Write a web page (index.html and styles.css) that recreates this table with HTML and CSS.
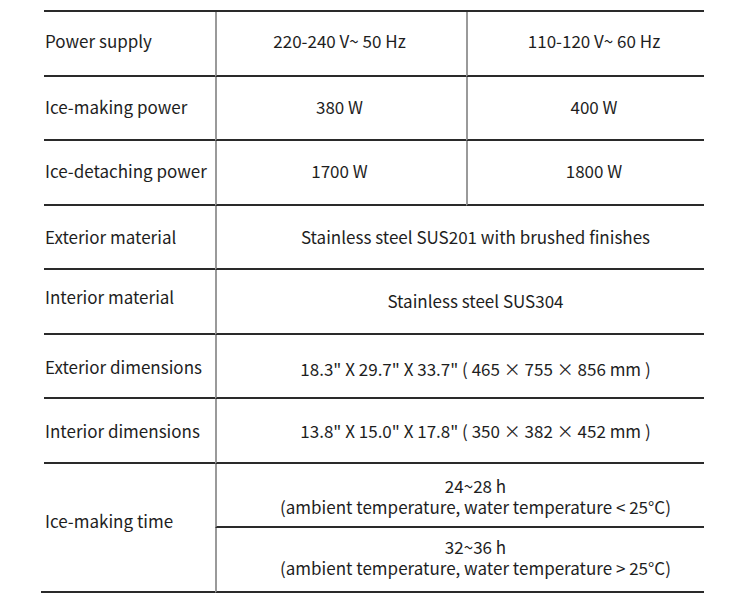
FILE: index.html
```html
<!DOCTYPE html>
<html lang="en">
<head>
<meta charset="utf-8">
<title>Specifications</title>
<link rel="stylesheet" href="styles.css">
</head>
<body>
<div class="spec">
  <div class="label r1 up3">Power supply</div>
  <div class="val c2 r1 up3">220-240 V~ 50 Hz</div>
  <div class="val c3 r1 up3">110-120 V~ 60 Hz</div>

  <div class="label r2 up1">Ice-making power</div>
  <div class="val c2 r2 up1">380 W</div>
  <div class="val c3 r2 up1">400 W</div>

  <div class="label r3 up2">Ice-detaching power</div>
  <div class="val c2 r3 up2">1700 W</div>
  <div class="val c3 r3 up2">1800 W</div>

  <div class="label r4">Exterior material</div>
  <div class="val wide r4">Stainless steel SUS201 with brushed finishes</div>

  <div class="label r5 up5">Interior material</div>
  <div class="val wide r5 up1">Stainless steel SUS304</div>

  <div class="label r6">Exterior dimensions</div>
  <div class="val wide r6 down2">18.3" X 29.7" X 33.7" ( 465 × 755 × 856 mm )</div>

  <div class="label r7">Interior dimensions</div>
  <div class="val wide r7">13.8" X 15.0" X 17.8" ( 350 × 382 × 452 mm )</div>

  <div class="label tall">Ice-making time</div>
  <div class="val wide r8 two">
    <span class="line">24~28 h</span>
    <span class="line">(ambient temperature, water temperature &lt; 25°C)</span>
  </div>
  <div class="val wide r9 two up3">
    <span class="line">32~36 h</span>
    <span class="line">(ambient temperature, water temperature &gt; 25°C)</span>
  </div>
</div>
</body>
</html>
```

FILE: styles.css
```css
html, body {
  margin: 0;
  padding: 0;
  background: #ffffff;
}

body {
  font-family: "Noto Sans CJK SC", "Noto Sans", sans-serif;
  font-size: 17px;
  color: #1e1e1e;
}

.spec {
  margin: 10px 0 0 44px;
  width: 660px;
  display: grid;
  grid-template-columns: 171px 251px 238px;
  grid-template-rows: repeat(9, 64.56px);
  border-top: 2px solid #2a2a2a;
}

.spec > div {
  border-bottom: 2px solid #2a2a2a;
  display: flex;
  align-items: center;
  line-height: 21px;
}

.label {
  grid-column: 1;
  padding-left: 1px;
  white-space: nowrap;
}

.val {
  justify-content: center;
  text-align: center;
  border-left: 2px solid #9a9a9a;
  white-space: nowrap;
}

.spec > .two {
  flex-direction: column;
  justify-content: center;
}

.line {
  display: block;
  height: 21px;
  line-height: 21px;
}

.c2 { grid-column: 2; padding-right: 4px; }
.c3 { grid-column: 3; padding-left: 16px; }
.wide { grid-column: 2 / 4; padding-left: 30px; }

.up1 { padding-bottom: 2px; }
.up2 { padding-bottom: 4px; }
.up3 { padding-bottom: 6px; }
.up5 { padding-bottom: 10px; }
.down2 { padding-top: 4px; }
.two.r8 { padding-top: 2px; }

.r1 { grid-row: 1; }
.r2 { grid-row: 2; }
.r3 { grid-row: 3; }
.r4 { grid-row: 4; }
.r5 { grid-row: 5; }
.r6 { grid-row: 6; }
.r7 { grid-row: 7; }
.r8 { grid-row: 8; }
.r9 { grid-row: 9; }

.tall {
  grid-row: 8 / 10;
  margin-left: -3px;
  padding-left: 4px;
  padding-bottom: 13px;
}
```
